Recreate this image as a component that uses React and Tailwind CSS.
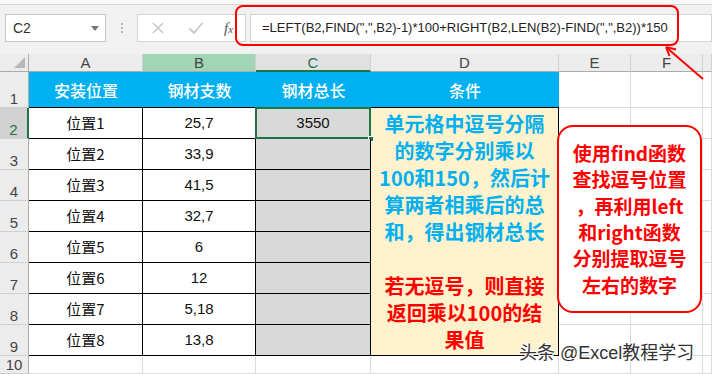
import React from "react"

const rows = [
  ["位置1", "25,7", "3550"],
  ["位置2", "33,9", ""],
  ["位置3", "41,5", ""],
  ["位置4", "32,7", ""],
  ["位置5", "6", ""],
  ["位置6", "12", ""],
  ["位置7", "5,18", ""],
  ["位置8", "13,8", ""],
]

const cjk = "font-['Noto_Sans_CJK_SC','Noto_Sans',sans-serif]"
const latin = "font-['Liberation_Sans','Noto_Sans_CJK_SC',sans-serif]"

function RowHead({ n, active }) {
  return (
    <div
      className={`flex items-end justify-center pb-px text-[15px] leading-none border-b border-[#d0d0d0] ${latin} ${
        active
          ? "bg-[#d2d2d2] text-[#217346] border-r-2 border-r-[#217346]"
          : "bg-[#ececec] text-[#444] border-r border-r-[#ababab]"
      }`}
    >
      {n}
    </div>
  )
}

function Gap() {
  return <div className="bg-white border-r border-b border-[#dadada]" />
}

export default function App() {
  return (
    <div className="relative w-[712px] h-[374px] overflow-hidden bg-[#f1f1f1]">
      {/* ribbon edge */}
      <div className="h-[5px] bg-[#f8f8f8] border-b border-[#d6d6d6]" />

      {/* formula bar */}
      <div className="flex items-start h-[49px] pt-[9px]">
        <div className={`ml-[5px] w-[101px] h-[28px] bg-white border border-[#c6c6c6] flex items-center justify-between pl-[7px] pr-[6px] text-[14px] text-[#333] ${latin}`}>
          <span>C2</span>
          <span className="w-0 h-0 border-l-[4px] border-r-[4px] border-t-[5px] border-l-transparent border-r-transparent border-t-[#777]" />
        </div>
        <div className="w-[31px] h-[28px] flex flex-col items-center justify-center gap-[2px]">
          <span className="w-[2px] h-[2px] bg-[#b8b8b8]" />
          <span className="w-[2px] h-[2px] bg-[#b8b8b8]" />
          <span className="w-[2px] h-[2px] bg-[#b8b8b8]" />
        </div>
        <div className="w-[109px] h-[28px] bg-white border border-[#d4d4d4] flex items-center pl-[12px] text-[#c4c4c4]">
          <svg width="14" height="14" viewBox="0 0 14 14" className="ml-px">
            <path d="M2 2L12 12M12 2L2 12" stroke="#c8c8c8" strokeWidth="1.6" />
          </svg>
          <svg width="16" height="14" viewBox="0 0 16 14" className="ml-[23px]">
            <path d="M1.5 7.5L6 12L14.5 2" stroke="#c8c8c8" strokeWidth="1.8" fill="none" />
          </svg>
          <span className="ml-[20px] italic text-[15px] text-[#555] font-['Liberation_Serif',serif]">
            f<span className="text-[11px]">x</span>
          </span>
        </div>
        <div className={`ml-[4px] flex-1 h-[28px] bg-white border border-[#d4d4d4] flex items-center pl-[11px] text-[13px] text-[#222] ${latin}`}>
          =LEFT(B2,FIND(",",B2)-1)*100+RIGHT(B2,LEN(B2)-FIND(",",B2))*150
        </div>
      </div>

      {/* sheet */}
      <div className="grid grid-cols-[29px_114px_113px_115px_188px_72px_72px_1fr] grid-rows-[18px_36px_repeat(8,31px)_1fr] h-[320px] bg-white">
        {/* column headers */}
        <div className="relative bg-[#ececec] border-r border-b border-[#ababab]">
          <span className="absolute right-[3px] bottom-[3px] w-0 h-0 border-l-[11px] border-t-[11px] border-l-transparent border-t-transparent border-b-0 border-r-0 [border-bottom:11px_solid_#b9b9b9]" />
        </div>
        {["A", "B", "C", "D", "E", "F", ""].map((c) => (
          <div
            key={c || "g"}
            className={`flex items-center justify-center text-[15px] leading-none text-[#444] border-r border-[#d0d0d0] ${latin} ${
              c === "B"
                ? "bg-[#a0d5b5] text-[#1d4c30] border-b border-b-[#ababab]"
                : c === "C"
                ? "bg-[#e1e1e1] text-[#217346] border-b-2 border-b-[#217346]"
                : "bg-[#ececec] border-b border-b-[#ababab]"
            }`}
          >
            {c}
          </div>
        ))}

        {/* row 1 */}
        <RowHead n="1" />
        {["安装位置", "钢材支数", "钢材总长", "条件"].map((t) => (
          <div key={t} className={`bg-[#00b0f0] border-b border-black flex items-center justify-center text-white text-[16px] font-medium ${cjk}`}>
            {t}
          </div>
        ))}
        <Gap />
        <Gap />
        <Gap />

        {/* rows 2-9 */}
        {rows.map((r, i) => (
          <React.Fragment key={i}>
            <RowHead n={String(i + 2)} active={i === 0} />
            <div className={`flex items-center justify-center border-r border-b border-black text-[15px] text-[#111] ${cjk}`}>
              {r[0]}
            </div>
            <div className={`flex items-center justify-center border-r border-b border-black text-[15px] text-[#111] ${latin}`}>
              {r[1]}
            </div>
            <div className={`relative flex items-center justify-center bg-[#d9d9d9] border-r border-b border-black text-[15px] text-[#111] ${latin}`}>
              {r[2]}
              {i === 0 && (
                <>
                  <span className="absolute -left-px -top-px right-[-1px] bottom-[-1px] border-2 border-[#217346]" />
                  <span className="absolute right-[-4px] bottom-[-4px] w-[6px] h-[6px] bg-[#217346] border border-white" />
                </>
              )}
            </div>
            {i === 0 && (
              <div className={`row-span-8 bg-[#fff2cc] border-r border-b border-black flex flex-col items-center justify-center text-center text-[20px] leading-[27px] font-bold ${cjk}`}>
                <div className="text-[#00b0f0]">
                  单元格中逗号分隔<br />
                  的数字分别乘以<br />
                  100和150，然后计<br />
                  算两者相乘后的总<br />
                  和，得出钢材总长
                </div>
                <div className="h-[27px]" />
                <div className="text-[#ff0000]">
                  若无逗号，则直接<br />
                  返回乘以100的结<br />
                  果值
                </div>
              </div>
            )}
            <Gap />
            <Gap />
            <Gap />
          </React.Fragment>
        ))}

        {/* row 10 */}
        <RowHead n="10" />
        <Gap />
        <Gap />
        <Gap />
        <Gap />
        <Gap />
        <Gap />
        <Gap />
      </div>

      {/* callouts */}
      <div className="absolute left-[235px] top-[5px] w-[444px] h-[41px] border-2 border-[#ff0000] rounded-[8px]" />
      <svg className="absolute left-[660px] top-[42px]" width="52" height="42" viewBox="0 0 52 42">
        <path d="M43 37L7 6" stroke="#ff0000" strokeWidth="2" />
        <path d="M6 5L16 7.5M6 5L9.5 14" stroke="#ff0000" strokeWidth="2" fill="none" />
      </svg>
      <div className={`absolute left-[557px] top-[125px] w-[145px] h-[188px] bg-white border-2 border-[#ff0000] rounded-[16px] flex items-center justify-center text-center text-[#ff0000] text-[19px] leading-[26.3px] font-bold ${cjk}`}>
        <div>
          使用find函数<br />
          查找逗号位置<br />
          ，再利用left<br />
          和right函数<br />
          分别提取逗号<br />
          左右的数字
        </div>
      </div>
      <div className={`absolute left-[519px] top-[340px] text-[18px] text-[#333] [text-shadow:1px_1px_0_#fff,-1px_-1px_0_#fff,1px_-1px_0_#fff,-1px_1px_0_#fff] ${latin}`}>
        头条 @Excel教程学习
      </div>
    </div>
  )
}
